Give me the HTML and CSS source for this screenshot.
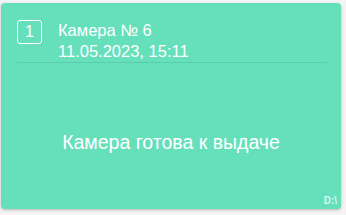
FILE: index.html
```html
<!DOCTYPE html>
<html lang="ru">
<head>
    <meta charset="UTF-8">
    <meta name="viewport" content="width=device-width, initial-scale=1.0">
    <title>Камера № 6</title>
    <link rel="stylesheet" href="styles.css">
</head>
<body>

    <div class="cell-card">
        <div class="cell-head">
            <div class="cell-num">1</div>
            <div class="cell-info">
                <div class="cell-title">Камера № 6</div>
                <div class="cell-date">11.05.2023, 15:11</div>
            </div>
        </div>

        <div class="cell-status">Камера готова к выдаче</div>

        <div class="cell-drive">D:\</div>
    </div>

</body>
</html>
```

FILE: styles.css
```css
body {
    font-family: "Liberation Sans", Arial, sans-serif;
    background-color: #f4f4f4;
    margin: 0;
    padding: 3px 5px 4px 1px;
}

.cell-card {
    position: relative;
    height: 206px;
    background: #66dfbb;
    color: white;
    border-radius: 4px;
    box-shadow: 0px 1px 3px rgba(0, 0, 0, 0.25);
    display: flex;
    flex-direction: column;
}

.cell-head {
    display: flex;
    gap: 16px;
    margin: 17px 14px 0 16px;
    border-bottom: 1px solid #5acca9;
}

.cell-num {
    width: 23px;
    height: 22px;
    border: 1px solid white;
    border-radius: 3px;
    font-size: 16px;
    line-height: 22px;
    text-align: center;
}

.cell-info {
    font-size: 16.5px;
    line-height: 21px;
}

.cell-status {
    flex: 1;
    display: flex;
    align-items: center;
    justify-content: center;
    font-size: 19.5px;
    padding-top: 12px;
}

.cell-drive {
    position: absolute;
    right: 4px;
    bottom: 3px;
    font-size: 10px;
    font-weight: bold;
    color: rgba(255, 255, 255, 0.75);
}
```
